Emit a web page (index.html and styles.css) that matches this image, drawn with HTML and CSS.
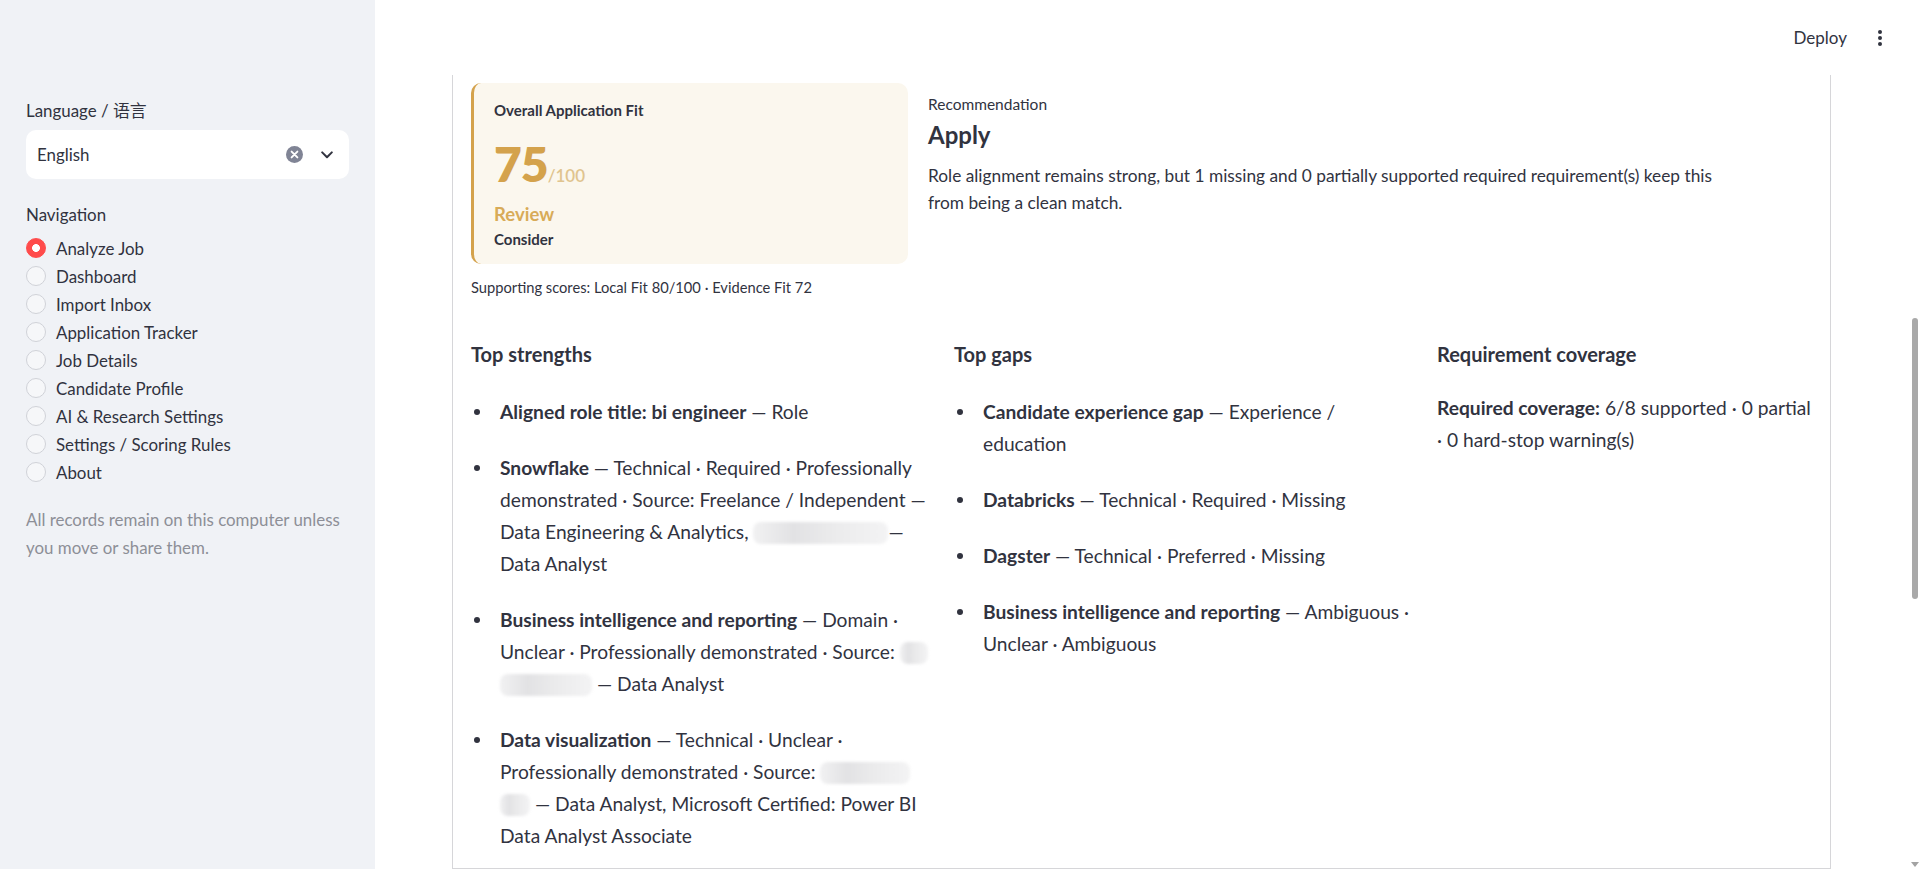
FILE: index.html
```html
<!DOCTYPE html>
<html lang="en">
<head>
  <meta charset="UTF-8">
  <title>Analyze Job</title>
  <link rel="stylesheet" href="styles.css">
</head>
<body>

  <aside class="sidebar">
    <div class="field-label">Language / 语言</div>
    <div class="select">
      <span class="select-value">English</span>
      <svg class="select-clear" viewBox="0 0 17 17" width="17" height="17">
        <circle cx="8.5" cy="8.5" r="8.5" fill="#808495"/>
        <path d="M5.6 5.6l5.8 5.8M11.4 5.6l-5.8 5.8" stroke="#fff" stroke-width="1.9" stroke-linecap="round"/>
      </svg>
      <svg class="select-chevron" viewBox="0 0 12 8" width="12" height="8">
        <path d="M1.2 1.4l4.8 4.8 4.8-4.8" fill="none" stroke="#31333f" stroke-width="2" stroke-linecap="round" stroke-linejoin="round"/>
      </svg>
    </div>

    <div class="field-label nav-label">Navigation</div>
    <ul class="radio-group">
      <li class="radio checked"><span class="radio-dot"></span>Analyze Job</li>
      <li class="radio"><span class="radio-dot"></span>Dashboard</li>
      <li class="radio"><span class="radio-dot"></span>Import Inbox</li>
      <li class="radio"><span class="radio-dot"></span>Application Tracker</li>
      <li class="radio"><span class="radio-dot"></span>Job Details</li>
      <li class="radio"><span class="radio-dot"></span>Candidate Profile</li>
      <li class="radio"><span class="radio-dot"></span>AI &amp; Research Settings</li>
      <li class="radio"><span class="radio-dot"></span>Settings / Scoring Rules</li>
      <li class="radio"><span class="radio-dot"></span>About</li>
    </ul>

    <p class="sidebar-note">All records remain on this computer unless you move or share them.</p>
  </aside>

  <main class="main">
    <header class="topbar">
      <span class="deploy">Deploy</span>
      <svg class="kebab" viewBox="0 0 4 16" width="4" height="16">
        <circle cx="2" cy="2" r="2" fill="#31333f"/>
        <circle cx="2" cy="8" r="2" fill="#31333f"/>
        <circle cx="2" cy="14" r="2" fill="#31333f"/>
      </svg>
    </header>

    <div class="block">
      <section class="panel">

        <div class="summary">
          <div>
            <div class="fit-card">
              <div class="fit-title">Overall Application Fit</div>
              <div class="fit-score"><span class="fit-value">75</span><span class="fit-max">/100</span></div>
              <div class="fit-band">Review</div>
              <div class="fit-action">Consider</div>
            </div>
            <p class="caption">Supporting scores: Local Fit 80/100 · Evidence Fit 72</p>
          </div>

          <div class="recommendation">
            <div class="rec-label">Recommendation</div>
            <div class="rec-title">Apply</div>
            <p class="rec-text">Role alignment remains strong, but 1 missing and 0 partially supported required requirement(s) keep this from being a clean match.</p>
          </div>
        </div>

        <div class="details">
          <div>
            <h5>Top strengths</h5>
            <ul class="bullets">
              <li><b>Aligned role title: bi engineer</b> — Role</li>
              <li><b>Snowflake</b> — Technical · Required · Professionally demonstrated · Source: Freelance / Independent — Data Engineering &amp; Analytics, <span class="redact redact-xl"></span>— Data Analyst</li>
              <li><b>Business intelligence and reporting</b> — Domain · Unclear · Professionally demonstrated · Source: <span class="redact redact-s"></span> <span class="redact redact-l"></span> — Data Analyst</li>
              <li><b>Data visualization</b> — Technical · Unclear · Professionally demonstrated · Source: <span class="redact redact-m"></span> <span class="redact redact-xs"></span> — Data Analyst, Microsoft Certified: Power BI Data Analyst Associate</li>
            </ul>
          </div>

          <div>
            <h5>Top gaps</h5>
            <ul class="bullets">
              <li><b>Candidate experience gap</b> — Experience / education</li>
              <li><b>Databricks</b> — Technical · Required · Missing</li>
              <li><b>Dagster</b> — Technical · Preferred · Missing</li>
              <li><b>Business intelligence and reporting</b> — Ambiguous · Unclear · Ambiguous</li>
            </ul>
          </div>

          <div>
            <h5>Requirement coverage</h5>
            <p class="coverage"><b>Required coverage:</b> 6/8 supported · 0 partial · 0 hard-stop warning(s)</p>
          </div>
        </div>

      </section>
    </div>
  </main>

  <div class="scroll-thumb"></div>
  <div class="scroll-arrow"></div>

</body>
</html>
```

FILE: styles.css
```css
* {
  box-sizing: border-box;
}

html, body {
  height: 100%;
}

body {
  margin: 0;
  display: flex;
  overflow: hidden;
  font-family: Lato, "Noto Sans CJK SC", sans-serif;
  color: #31333f;
  background: #ffffff;
}

/* ---------- sidebar ---------- */

.sidebar {
  width: 375px;
  flex: none;
  height: 869px;
  background: #f0f2f6;
  padding: 97px 26px 0;
}

.field-label {
  font-size: 16.9px;
  line-height: 28px;
}

.select {
  margin-top: 5px;
  height: 49px;
  background: #ffffff;
  border-radius: 10px;
  display: flex;
  align-items: center;
  padding: 0 16px 0 11px;
}

.select-value {
  flex: 1;
  font-size: 16.9px;
}

.select-clear {
  margin-right: 18px;
}

.nav-label {
  margin-top: 22px;
}

.radio-group {
  list-style: none;
  margin: 5px 0 0;
  padding: 0;
}

.radio {
  display: flex;
  align-items: center;
  gap: 10px;
  height: 28px;
  font-size: 16.9px;
}

.radio-dot {
  width: 20px;
  height: 20px;
  border-radius: 50%;
  border: 1px solid #d0d2d8;
  background: #f6f7f9;
}

.radio.checked .radio-dot {
  border-color: #ff4b4b;
  background: radial-gradient(circle, #ffffff 0 3.6px, #ff4b4b 4.2px);
}

.sidebar-note {
  margin: 20px 0 0;
  font-size: 16.9px;
  line-height: 28px;
  color: #8d8f97;
}

/* ---------- main ---------- */

.main {
  flex: 1;
  min-width: 0;
  height: 869px;
  display: flex;
  flex-direction: column;
}

.topbar {
  height: 75px;
  flex: none;
  display: flex;
  align-items: center;
  justify-content: flex-end;
  gap: 31px;
  padding-right: 38px;
}

.deploy {
  font-size: 17px;
}

.block {
  flex: 1;
  min-height: 0;
  padding: 0 89px 0 77px;
}

.panel {
  height: 100%;
  border: 1px solid #d6d6d9;
  border-top: none;
  padding: 8px 18px 0;
}

.summary {
  display: grid;
  grid-template-columns: 437px 1fr;
  column-gap: 20px;
}

.fit-card {
  background: #fbf7ee;
  border-left: 3px solid #d4a24c;
  border-radius: 10px;
  padding: 16px 20px 14px;
}

.fit-title {
  font-size: 15px;
  font-weight: 700;
  line-height: 22px;
}

.fit-score {
  margin-top: 19px;
  display: flex;
  align-items: baseline;
  line-height: 48px;
}

.fit-value {
  font-size: 48px;
  font-weight: 800;
  color: #d4a24c;
  letter-spacing: -1px;
}

.fit-max {
  font-size: 17px;
  line-height: 1;
  font-weight: 600;
  color: #e0c48f;
}

.fit-band {
  margin-top: 14px;
  font-size: 18.5px;
  line-height: 24px;
  font-weight: 700;
  color: #d8ab58;
}

.fit-action {
  margin-top: 2px;
  font-size: 15px;
  line-height: 22px;
  font-weight: 700;
}

.caption {
  margin: 12px 0 0;
  font-size: 14.7px;
  line-height: 22px;
}

.recommendation {
  padding-top: 10px;
}

.rec-label {
  font-size: 15.5px;
  line-height: 22px;
}

.rec-title {
  margin-top: 5px;
  font-size: 24px;
  line-height: 30px;
  font-weight: 700;
}

.rec-text {
  margin: 12px 0 0;
  max-width: 800px;
  font-size: 17.3px;
  line-height: 27px;
}

.details {
  margin-top: 44px;
  display: grid;
  grid-template-columns: 463px 463px 1fr;
  column-gap: 20px;
}

h5 {
  margin: 0;
  font-size: 20px;
  line-height: 24px;
  font-weight: 700;
}

.bullets {
  list-style: none;
  margin: 30px 0 0;
  padding: 0 0 0 29px;
}

.bullets li {
  position: relative;
  font-size: 19.2px;
  line-height: 32px;
}

.bullets li + li {
  margin-top: 24px;
}

.bullets li::before {
  content: "";
  position: absolute;
  left: -26px;
  top: 13px;
  width: 6px;
  height: 6px;
  border-radius: 50%;
  background: #31333f;
}

.coverage {
  margin: 26px 0 0;
  font-size: 19.2px;
  line-height: 32px;
}

/* blurred-out names */
.redact {
  display: inline-block;
  height: 22px;
  vertical-align: -5px;
  border-radius: 8px;
  background: linear-gradient(90deg, #f1f1f2, #e2e2e4 30%, #ebebec 60%, #f3f3f4);
  filter: blur(1.5px);
}

.redact-xs { width: 30px; }
.redact-s { width: 28px; }
.redact-m { width: 90px; }
.redact-l { width: 92px; }
.redact-xl { width: 135px; }

/* ---------- page scrollbar ---------- */

.scroll-thumb {
  position: fixed;
  left: 1912px;
  top: 318px;
  width: 6px;
  height: 281px;
  border-radius: 3px;
  background: #a9a9a9;
}

.scroll-arrow {
  position: fixed;
  left: 1911px;
  top: 862px;
  border-left: 4px solid transparent;
  border-right: 4px solid transparent;
  border-top: 5px solid #a3a3a3;
}
```
